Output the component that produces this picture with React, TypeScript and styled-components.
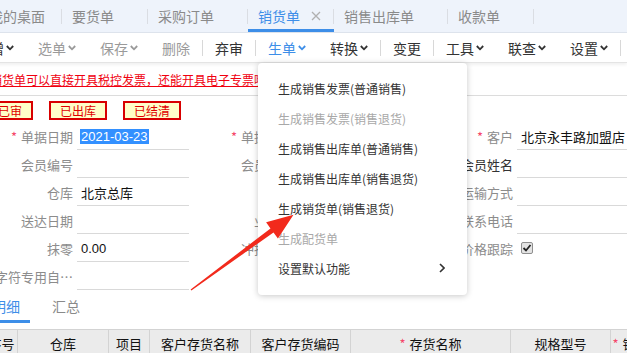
import styled, { createGlobalStyle } from "styled-components";

const GlobalStyle = createGlobalStyle`
    html, body {
        margin: 0;
        padding: 0;
        background: #ffffff;
    }
    body {
        font-family: "Liberation Sans", "Noto Sans CJK SC", sans-serif;
        color: #333;
    }
    * {
        box-sizing: border-box;
    }
`

const BLUE = "#3d8ee8";

const Chevron = ({color}: { color: string }) => (
    <svg width="8" height="6" viewBox="0 0 8 6">
        <polyline points="0.8,1 4,4.3 7.2,1" fill="none" stroke={color} strokeWidth="1.8"/>
    </svg>
);

const tabs = [
    {name: "我的桌面", home: true},
    {name: "要货单"},
    {name: "采购订单"},
    {name: "销货单", active: true},
    {name: "销售出库单"},
    {name: "收款单"},
];

type ToolItem = { name: string; menu?: boolean; tone?: "dark" | "muted" | "blue"; sepAfter?: boolean };

const tools: ToolItem[] = [
    {name: "新增", menu: true, tone: "dark"},
    {name: "选单", menu: true, tone: "muted"},
    {name: "保存", menu: true, tone: "muted"},
    {name: "删除", tone: "muted", sepAfter: true},
    {name: "弃审", tone: "dark", sepAfter: true},
    {name: "生单", menu: true, tone: "blue"},
    {name: "转换", menu: true, tone: "dark", sepAfter: true},
    {name: "变更", tone: "dark", sepAfter: true},
    {name: "工具", menu: true, tone: "dark"},
    {name: "联查", menu: true, tone: "dark"},
    {name: "设置", menu: true, tone: "dark", sepAfter: true},
];

const toneColor = (tone?: string) => tone === "blue" ? BLUE : tone === "muted" ? "#9a9a9a" : "#333";

type Field = { label: string; value?: string; required?: boolean; selected?: boolean; check?: boolean; strong?: boolean };

const columns: Field[][] = [
    [
        {label: "单据日期", value: "2021-03-23", required: true, selected: true},
        {label: "会员编号"},
        {label: "仓库", value: "北京总库"},
        {label: "送达日期"},
        {label: "抹零", value: "0.00"},
        {label: "字符专用自…"},
    ],
    [
        {label: "单据编号", required: true},
        {label: "会员卡号"},
        {label: "部门"},
        {label: "业务员"},
        {label: "冲抵金额"},
        {label: "备注"},
    ],
    [
        {label: "客户", value: "北京永丰路加盟店", required: true},
        {label: "会员姓名", strong: true},
        {label: "运输方式"},
        {label: "联系电话"},
        {label: "价格跟踪", check: true},
    ],
];

const menuItems = [
    {name: "生成销售发票(普通销售)"},
    {name: "生成销售发票(销售退货)", disabled: true},
    {name: "生成销售出库单(普通销售)"},
    {name: "生成销售出库单(销售退货)"},
    {name: "生成销货单(销售退货)"},
    {name: "生成配货单", disabled: true},
    {name: "设置默认功能", sub: true},
];

const headers = [
    {name: "序号", w: 32},
    {name: "仓库", w: 91},
    {name: "项目", w: 41},
    {name: "客户存货名称", w: 101},
    {name: "客户存货编码", w: 100},
    {name: "存货名称", w: 160, required: true},
    {name: "规格型号", w: 100},
    {name: "销售数量", w: 66, required: true},
];

const App = () => {
    return <>
        <GlobalStyle/>
        <Page>
            <TabBar>
                {tabs.map((t) => (
                    <Tab key={t.name} $active={!!t.active} $home={!!t.home}>
                        {t.name}
                        {!t.home && (
                            <CloseMark $show={!!t.active}>
                                <svg width="10" height="10" viewBox="0 0 10 10">
                                    <path d="M1 1 L9 9 M9 1 L1 9" stroke="#b0b0b0" strokeWidth="1.3"/>
                                </svg>
                            </CloseMark>
                        )}
                    </Tab>
                ))}
            </TabBar>

            <Toolbar>
                {tools.map((t) => (
                    <ToolGroup key={t.name}>
                        <ToolButton $color={toneColor(t.tone)}>
                            {t.name}
                            {t.menu && <Chevron color={toneColor(t.tone)}/>}
                        </ToolButton>
                        {t.sepAfter && <ToolSep/>}
                    </ToolGroup>
                ))}
            </Toolbar>

            <Notice>
                <a href="#">销货单可以直接开具税控发票，还能开具电子专票哦</a>
            </Notice>

            <BadgeRow>
                <Badge>已审</Badge>
                <Badge>已出库</Badge>
                <Badge>已结清</Badge>
            </BadgeRow>

            <Form>
                {columns.map((col, ci) => (
                    <FormColumn key={ci}>
                        {col.map((f) => (
                            <FormRow key={f.label}>
                                <Label $strong={!!f.strong}>
                                    {f.required && <Star>*</Star>}
                                    {f.label}
                                </Label>
                                <Value $line={!f.check}>
                                    {f.selected ? <Selected>{f.value}</Selected> : f.value}
                                    {f.check && (
                                        <CheckBox>
                                            <svg width="10" height="10" viewBox="0 0 10 10">
                                                <path d="M1.5 5 L4 7.5 L8.5 2" fill="none" stroke="#222" strokeWidth="1.8"/>
                                            </svg>
                                        </CheckBox>
                                    )}
                                </Value>
                            </FormRow>
                        ))}
                    </FormColumn>
                ))}
            </Form>

            <SubTabs>
                <SubTab $active>明细</SubTab>
                <SubTab>汇总</SubTab>
            </SubTabs>

            <GridHeader>
                {headers.map((h) => (
                    <HeadCell key={h.name} $w={h.w}>
                        {h.required && <Star>*</Star>}
                        {h.name}
                    </HeadCell>
                ))}
            </GridHeader>

            <Menu>
                {menuItems.map((m) => (
                    <MenuItem key={m.name} $disabled={!!m.disabled}>
                        {m.name}
                        {m.sub && (
                            <svg width="6" height="10" viewBox="0 0 6 10">
                                <polyline points="1,1 5,5 1,9" fill="none" stroke="#333" strokeWidth="1.6"/>
                            </svg>
                        )}
                    </MenuItem>
                ))}
            </Menu>

            {/* 红色箭头标注 */}
            <Arrow width="627" height="353" viewBox="0 0 627 353">
                <polygon
                    points="190.6,289.5 270.5,228.4 266.1,222.3 293.5,214.8 277.9,238.5 273.5,232.4 191.4,290.5"
                    fill="#f22a1c"/>
            </Arrow>
        </Page>
    </>
};

const Page = styled.div`
    position: relative;
    width: 627px;
    height: 353px;
    overflow: hidden;
    background: #fff;
`

const TabBar = styled.div`
    height: 33px;
    display: flex;
    align-items: stretch;
    margin-left: -11px;
    background: #eef3fb;
    border-bottom: 1px solid #dde3ec;
`

const Tab = styled.div<{ $active: boolean; $home: boolean }>`
    position: relative;
    display: flex;
    align-items: center;
    gap: 11px;
    padding: 0 ${p => p.$home ? "17px" : "13px"} 0 ${p => p.$home ? "0" : "10px"};
    font-size: 14px;
    font-family: "Noto Sans CJK SC", sans-serif;
    color: ${p => p.$active ? BLUE : "#8a8a8a"};
    white-space: nowrap;

    &::after {
        content: "";
        position: absolute;
        right: 0;
        top: 9px;
        bottom: 8px;
        width: 1px;
        background: #dadde3;
    }

    &::before {
        content: "";
        display: ${p => p.$active ? "block" : "none"};
        position: absolute;
        left: 0;
        right: 0;
        bottom: 0;
        height: 3px;
        background: ${BLUE};
    }
`

const CloseMark = styled.span<{ $show: boolean }>`
    display: flex;
    width: 10px;
    visibility: ${p => p.$show ? "visible" : "hidden"};
`

const Toolbar = styled.div`
    height: 30px;
    display: flex;
    align-items: center;
    margin-left: -36px;
    background: #fff;
    border-bottom: 1px solid #e4e4e4;
    box-shadow: 0 2px 3px rgba(0, 0, 0, 0.06);
    position: relative;
    z-index: 1;
`

const ToolGroup = styled.div`
    display: flex;
    align-items: center;
`

const ToolButton = styled.div<{ $color: string }>`
    display: flex;
    align-items: center;
    gap: 2px;
    padding: 0 12px;
    font-size: 14px;
    font-family: "Noto Sans CJK SC", sans-serif;
    color: ${p => p.$color};
    white-space: nowrap;
`

const ToolSep = styled.div`
    width: 1px;
    height: 16px;
    background: #d8d8d8;
`

const Notice = styled.div`
    height: 33px;
    display: flex;
    align-items: center;
    margin-left: -10px;
    border-bottom: 1px solid #dcdcdc;
    font-size: 12px;
    font-family: "Noto Sans CJK SC", sans-serif;
    white-space: nowrap;

    a {
        color: #f0000f;
        text-decoration: underline;
    }
`

const BadgeRow = styled.div`
    display: flex;
    gap: 16px;
    margin-left: -13px;
    padding-top: 5px;
    height: 26px;
`

const Badge = styled.div`
    height: 19px;
    display: flex;
    align-items: center;
    padding: 0 9px;
    border: 2px solid #d80000;
    background: #ffffc8;
    color: #e00000;
    font-size: 12px;
    font-family: "Noto Sans CJK SC", sans-serif;
`

const Form = styled.div`
    display: flex;
    gap: 14px;
    margin-left: -13px;
    height: 168px;
`

const FormColumn = styled.div`
    display: flex;
    flex-direction: column;
    width: 206px;
    flex-shrink: 0;
`

const FormRow = styled.div`
    height: 28px;
    display: flex;
    align-items: stretch;
`

const Label = styled.div<{ $strong: boolean }>`
    width: 90px;
    padding-right: 4px;
    display: flex;
    align-items: center;
    justify-content: flex-end;
    font-size: 13px;
    font-family: "Noto Sans CJK SC", sans-serif;
    color: ${p => p.$strong ? "#333" : "#8c8c8c"};
    white-space: nowrap;
    overflow: hidden;
`

const Star = styled.span`
    color: #f5476a;
    margin-right: 4px;
`

const Value = styled.div<{ $line: boolean }>`
    width: 112px;
    display: flex;
    align-items: center;
    padding: 1px 0 0 4px;
    font-size: 13px;
    font-family: "Liberation Sans", "Noto Sans CJK SC", sans-serif;
    color: #111;
    white-space: nowrap;
    border-bottom: 1px solid ${p => p.$line ? "#d9d9d9" : "transparent"};
`

const Selected = styled.span`
    background: #3390ff;
    color: #fff;
    padding: 0 1px;
    margin-left: -1px;
`

const CheckBox = styled.span`
    width: 12px;
    height: 12px;
    margin-left: 0;
    border: 1px solid #8f8f8f;
    border-radius: 2px;
    background: #e3e3e3;
    display: flex;
    align-items: center;
    justify-content: center;
`

const SubTabs = styled.div`
    display: flex;
    height: 33px;
    margin-left: -18px;
`

const SubTab = styled.div<{ $active?: boolean }>`
    display: flex;
    align-items: center;
    padding: 0 10px;
    margin-right: 12px;
    font-size: 14px;
    font-family: "Noto Sans CJK SC", sans-serif;
    color: ${p => p.$active ? BLUE : "#8a8a8a"};
    border-bottom: 3px solid ${p => p.$active ? BLUE : "transparent"};
    padding-top: 2px;
`

const GridHeader = styled.div`
    display: flex;
    margin-top: 6px;
    margin-left: -14px;
    height: 28px;
    background: #ebebeb;
    border-top: 1px solid #d3d3d3;
`

const HeadCell = styled.div<{ $w: number }>`
    width: ${p => p.$w}px;
    flex-shrink: 0;
    display: flex;
    align-items: center;
    justify-content: center;
    border-right: 1px solid #d3d3d3;
    font-size: 13px;
    font-family: "Noto Sans CJK SC", sans-serif;
    color: #111;
    white-space: nowrap;
`

const Menu = styled.div`
    position: absolute;
    left: 258px;
    top: 63px;
    width: 209px;
    height: 232px;
    padding: 10px 0 12px;
    background: #fff;
    border-radius: 4px;
    box-shadow: 0 1px 6px rgba(0, 0, 0, 0.22);
    z-index: 2;
`

const MenuItem = styled.div<{ $disabled: boolean }>`
    height: 30px;
    display: flex;
    align-items: center;
    justify-content: space-between;
    padding: 0 22px 0 20px;
    font-size: 12px;
    font-family: "Noto Sans CJK SC", sans-serif;
    color: ${p => p.$disabled ? "#a8a8a8" : "#333"};
    white-space: nowrap;
`

const Arrow = styled.svg`
    position: absolute;
    left: 0;
    top: 0;
    pointer-events: none;
    z-index: 3;
`

export default App;
